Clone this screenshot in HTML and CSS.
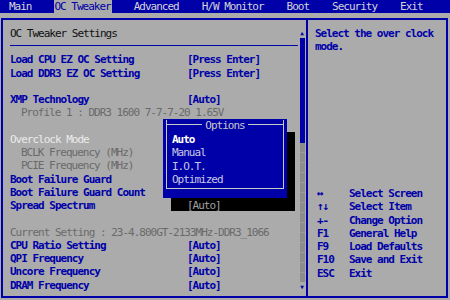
FILE: index.html
```html
<!DOCTYPE html>
<html>
<head>
  <title>BIOS - OC Tweaker</title>
  <meta name="viewport" content="width=device-width, initial-scale=1.0">
  <link rel="stylesheet" href="styles.css">
</head>
<body>
  <nav class="tabs">
    <span class="tab">Main</span>
    <span class="tab active">OC Tweaker</span>
    <span class="tab">Advanced</span>
    <span class="tab">H/W Monitor</span>
    <span class="tab">Boot</span>
    <span class="tab">Security</span>
    <span class="tab">Exit</span>
  </nav>

  <div class="frame">
    <div class="settings">
      <h1 class="title">OC Tweaker Settings</h1>
      <hr class="rule">

      <div class="row"><span class="label">Load CPU EZ OC Setting</span><span class="value">[Press Enter]</span></div>
      <div class="row"><span class="label">Load DDR3 EZ OC Setting</span><span class="value">[Press Enter]</span></div>
      <div class="row"></div>
      <div class="row"><span class="label">XMP Technology</span><span class="value">[Auto]</span></div>
      <div class="row info indent">Profile 1 : DDR3 1600 7-7-7-20 1.65V</div>
      <div class="row"></div>
      <div class="row selected"><span class="label">Overclock Mode</span></div>
      <div class="row info indent"><span class="label">BCLK Frequency (MHz)</span></div>
      <div class="row info indent"><span class="label">PCIE Frequency (MHz)</span></div>
      <div class="row"><span class="label">Boot Failure Guard</span></div>
      <div class="row"><span class="label">Boot Failure Guard Count</span></div>
      <div class="row"><span class="label">Spread Spectrum</span><span class="value shaded">[Auto]</span></div>
      <div class="row"></div>
      <div class="row info">Current Setting : 23-4.800GT-2133MHz-DDR3_1066</div>
      <div class="row"><span class="label">CPU Ratio Setting</span><span class="value">[Auto]</span></div>
      <div class="row"><span class="label">QPI Frequency</span><span class="value">[Auto]</span></div>
      <div class="row"><span class="label">Uncore Frequency</span><span class="value">[Auto]</span></div>
      <div class="row"><span class="label">DRAM Frequency</span><span class="value">[Auto]</span></div>

      <!-- option list of the selected item -->
      <div class="popup">
        <div class="popup-frame">
          <div class="popup-head">Options</div>
          <div class="opt current">Auto</div>
          <div class="opt">Manual</div>
          <div class="opt">I.O.T.</div>
          <div class="opt">Optimized</div>
        </div>
      </div>
    </div>

    <div class="scrollbar">
      <span class="arrow">&#9650;</span>
      <div class="thumb"></div>
      <div class="track"></div>
      <span class="arrow">&#9660;</span>
    </div>

    <div class="help">
      <p class="desc">Select the over clock<br>mode.</p>
      <div class="keys">
        <span>&#8596;</span><span>Select Screen</span>
        <span>&#8593;&#8595;</span><span>Select Item</span>
        <span>+-</span><span>Change Option</span>
        <span>F1</span><span>General Help</span>
        <span>F9</span><span>Load Defaults</span>
        <span>F10</span><span>Save and Exit</span>
        <span>ESC</span><span>Exit</span>
      </div>
    </div>
  </div>
</body>
</html>
```

FILE: styles.css
```css
* {
  box-sizing: border-box;
  margin: 0;
  padding: 0;
}

body {
  width: 450px;
  height: 300px;
  overflow: hidden;
  background-color: #ababab;
  color: #0000a8;
  font-family: "DejaVu Sans Mono", "Liberation Mono", monospace;
  font-size: 11px;
  font-weight: bold;
  letter-spacing: -1px;
  line-height: 13.25px;
}

/* Top menu bar */
.tabs {
  display: flex;
  gap: 23px;
  height: 13px;
  padding-left: 9px;
  background-color: #0000a8;
  line-height: 13px;
}

.tab {
  color: #d4d4d4;
  font-weight: normal;
}

.tab.active {
  background-color: #ababab;
  color: #0000a8;
  padding: 0 1px;
  margin: 0 -1px;
}

/* Main frame */
.frame {
  display: grid;
  grid-template-columns: 295px 8px 1fr;
  height: 280px;
  margin: 5px 2px 0 1px;
  border: 2px solid #0000a8;
}

.settings {
  position: relative;
  padding: 7px 0 0 7px;
}

.title {
  font-size: 11px;
  font-weight: normal;
  color: #101010;
}

.rule {
  border: none;
  border-top: 1px solid #0000a8;
  margin: 5px 0 7px 0;
}

.row {
  display: flex;
  height: 13.25px;
  white-space: nowrap;
}

.row .label {
  width: 177px;
}

.row.info {
  color: #6a6a6a;
  font-weight: normal;
}

.row.indent {
  padding-left: 11px;
}

.row.indent .label {
  width: 166px;
}

.row.selected {
  color: #ececec;
  font-weight: normal;
}

.value.shaded {
  position: relative;
  z-index: 2;
  color: #a0a0a0;
  font-weight: normal;
}

/* Options popup */
.popup {
  position: absolute;
  left: 160px;
  top: 99px;
  width: 124px;
  height: 79px;
  padding: 5px 3px 5px 3px;
  background-color: #0000a8;
  box-shadow: 8px 13px 0 #000;
  color: #c8c8e4;
  font-weight: normal;
  z-index: 1;
}

.popup-frame {
  height: 100%;
  border: 1px solid #c8c8c8;
  border-top: none;
}

.popup-head {
  display: flex;
  gap: 3px;
  height: 11px;
  margin-top: -4px;
  margin-bottom: 2px;
  line-height: 11px;
  color: #c8c8c8;
}

.popup-head::before,
.popup-head::after {
  content: "";
  flex: 1;
  height: 0;
  margin-top: 4px;
  border-top: 1px solid #c8c8c8;
}

.opt {
  height: 13.25px;
  padding-left: 5px;
}

.opt.current {
  color: #ffffff;
  font-weight: bold;
}

/* Scrollbar */
.scrollbar {
  display: flex;
  flex-direction: column;
  align-items: center;
  padding: 8px 0 4px;
  width: 6px;
  margin-left: 1px;
}

.arrow {
  font-size: 6px;
  line-height: 10px;
  letter-spacing: 0;
}

.thumb {
  width: 5px;
  height: 105px;
  background-color: #0000a8;
}

.track {
  width: 5px;
  flex: 1;
  background: repeating-linear-gradient(#8c8c8c 0 9px, #9c9c9c 9px 10px);
}

/* Help panel */
.help {
  border-left: 2px solid #0000a8;
  padding: 7px 0 0 7px;
}

.desc {
  height: 160px;
}

.keys {
  display: grid;
  grid-template-columns: 32px 1fr;
  grid-auto-rows: 13.25px;
  padding-left: 2px;
}
```
